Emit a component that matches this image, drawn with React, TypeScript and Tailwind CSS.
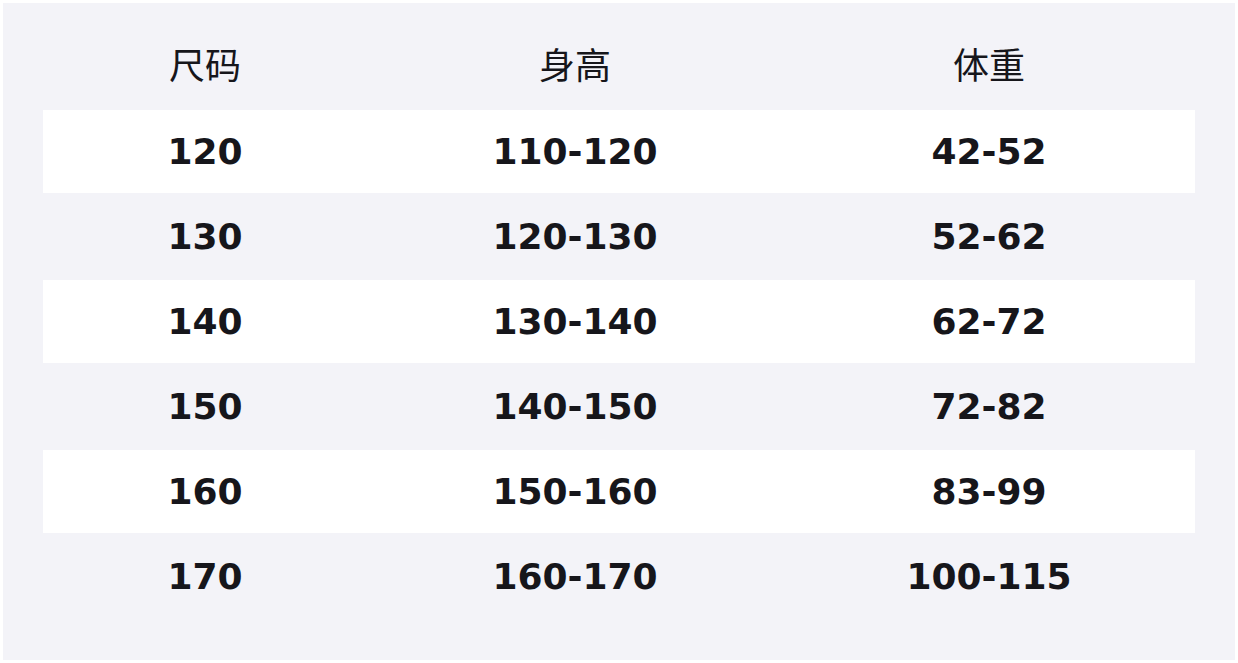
const ROWS = [
  ["120", "110-120", "42-52"],
  ["130", "120-130", "52-62"],
  ["140", "130-140", "62-72"],
  ["150", "140-150", "72-82"],
  ["160", "150-160", "83-99"],
  ["170", "160-170", "100-115"],
];

const COLS = "grid grid-cols-[324px_416px_412px] items-center text-center";

export default function App() {
  return (
    <div className="h-[663px] w-[1238px] bg-white p-[3px]">
      <div
        className="h-[657px] w-[1232px] bg-[#f3f3f8] px-[40px] text-[#16161b]"
        style={{ fontFamily: '"DejaVu Sans", "Noto Sans CJK SC", sans-serif' }}
      >
        <div className={`${COLS} h-[107px] pt-[20px] text-[36px] font-normal`}>
          <span>尺码</span>
          <span>身高</span>
          <span>体重</span>
        </div>
        <div className="flex flex-col gap-[2px]">
          {ROWS.map((r, i) => (
            <div
              key={r[0]}
              className={`${COLS} h-[83px] text-[36px] font-bold ${
                i % 2 === 0 ? "bg-white" : ""
              }`}
            >
              {r.map((c) => (
                <span key={c}>{c}</span>
              ))}
            </div>
          ))}
        </div>
      </div>
    </div>
  );
}
